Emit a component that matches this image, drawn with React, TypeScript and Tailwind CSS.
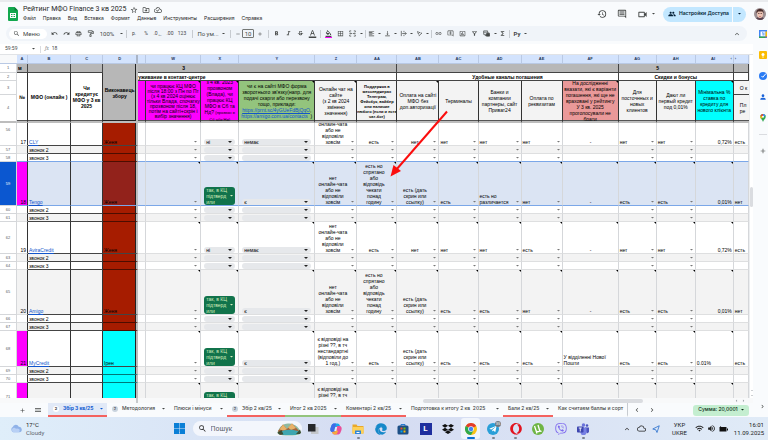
import { ReactNode } from "react";
import {
  MdAdd,
  MdBorderAll,
  MdChevronLeft,
  MdChevronRight,
  MdFormatAlignLeft,
  MdFormatBold,
  MdFormatColorFill,
  MdFormatColorText,
  MdFormatItalic,
  MdFunctions,
  MdGroup,
  MdHistory,
  MdInsertChartOutlined,
  MdKeyboardArrowUp,
  MdLink,
  MdMenu,
  MdOutlineAddComment,
  MdOutlineCloud,
  MdOutlineCloudDone,
  MdOutlineDriveFileMove,
  MdOutlineFilterAlt,
  MdOutlineInsertComment,
  MdOutlinePrint,
  MdOutlineVideocam,
  MdPerson,
  MdRedo,
  MdRemove,
  MdSearch,
  MdStarBorder,
  MdStrikethroughS,
  MdTextRotationAngleup,
  MdUndo,
  MdVerticalAlignBottom,
  MdVolumeUp,
  MdWifi,
} from "react-icons/md";
import { FaDropbox, FaEdge, FaOpera, FaTelegramPlane, FaViber } from "react-icons/fa";

const Caret = ({ className = "w-1 text-[#444746]" }: { className?: string }) => (
  <svg viewBox="0 0 8 4" className={`shrink-0 ${className}`} aria-hidden="true">
    <path d="M0 0h8L4 4z" fill="currentColor" />
  </svg>
);

/* ---------- header ---------- */

const menus = [
  "Файл",
  "Правка",
  "Вид",
  "Вставка",
  "Формат",
  "Данные",
  "Инструменты",
  "Расширения",
  "Справка",
];

const SheetsLogo = () => (
  <svg viewBox="0 0 20 28" className="h-[14px] w-[10px]" aria-hidden="true">
    <path d="M2 0h11l7 7v19a2 2 0 0 1-2 2H2a2 2 0 0 1-2-2V2a2 2 0 0 1 2-2z" fill="#12a84e" />
    <path d="M13 0l7 7h-7z" fill="#0b7a36" />
    <path d="M4 12h12v10H4zM6 14v2h3v-2zM11 14v2h3v-2zM6 18v2h3v-2zM11 18v2h3v-2z" fill="#fff" fillRule="evenodd" />
  </svg>
);

const Avatar = () => (
  <svg viewBox="0 0 24 24" className="size-3 rounded-full" aria-hidden="true">
    <rect width="24" height="24" fill="#9c8f92" />
    <path d="M3 24c1-5 5-6 9-6s8 1 9 6z" fill="#5b4450" />
    <ellipse cx="12" cy="12" rx="6" ry="8" fill="#ecc4b4" />
    <path d="M5 11C4 4 8 2 12 2s8 2 7 9l-2-4H8z" fill="#4a2e2c" />
    <path d="M8 11h3M13 11h3" stroke="#4a2e2c" strokeWidth="1.4" />
    <path d="M10 17h4" stroke="#c2575a" strokeWidth="1.2" />
  </svg>
);

const Header = () => (
  <header className="flex h-[26px] shrink-0 items-center border-t-2 border-[#e9ebee] bg-[#f9fbfd] pr-0.5 pl-2 text-[#1f1f1f]">
    <SheetsLogo />
    <div className="ml-[5px]">
      <div className="flex h-[9px] items-center gap-1 text-[#444746]">
        <h1 className="text-[7px] leading-[9px] text-[#1f1f1f]">Рейтинг МФО Finance 3 кв 2025</h1>
        <button aria-label="Пометить">
          <MdStarBorder className="size-2" />
        </button>
        <button aria-label="Переместить">
          <MdOutlineDriveFileMove className="size-2" />
        </button>
        <button aria-label="Статус документа">
          <MdOutlineCloudDone className="size-2" />
        </button>
      </div>
      <nav className="flex h-[9px] items-center gap-[7px] font-[Inter,sans-serif] text-[5px] leading-[9px]">
        {menus.map((menu) => (
          <button key={menu}>{menu}</button>
        ))}
      </nav>
    </div>
    <div className="ml-auto flex items-center text-[#444746]">
      <button aria-label="История" className="mr-[10px]">
        <MdHistory className="size-[10px]" />
      </button>
      <button aria-label="Комментарии" className="mr-[10px]">
        <MdOutlineInsertComment className="size-[10px]" />
      </button>
      <button aria-label="Видеовстреча" className="mr-2 flex items-center gap-1">
        <MdOutlineVideocam className="size-[11px]" />
        <Caret className="w-[3px]" />
      </button>
      <div className="flex h-[15px] items-center rounded-full bg-[#c2e7ff] text-[#001d35]">
        <button className="flex h-full items-center gap-[3px] border-r border-[#f9fbfd] pr-[3px] pl-[5px] font-[Inter,sans-serif] text-[5px] font-semibold">
          <MdGroup className="size-2" />
          Настройки Доступа
        </button>
        <button aria-label="Быстрые действия" className="px-[5px]">
          <Caret className="w-[3px]" />
        </button>
      </div>
      <button aria-label="Аккаунт" className="ml-2">
        <Avatar />
      </button>
    </div>
  </header>
);

/* ---------- toolbar ---------- */

const Tool = ({ label, w = "w-3", children }: { label: string; w?: string; children: ReactNode }) => (
  <button aria-label={label} className={`flex h-full shrink-0 items-center justify-center ${w}`}>
    {children}
  </button>
);

const Drop = ({ label }: { label: string }) => (
  <Tool label={label} w="w-1.5">
    <Caret className="w-[3px]" />
  </Tool>
);

const Sep = ({ w }: { w: string }) => (
  <span className={`flex shrink-0 justify-center ${w}`}>
    <span className="h-2 w-px bg-[#c7cbd0]" />
  </span>
);

const ico = "size-[7px]";

const Toolbar = () => (
  <div className="bg-[#f9fbfd] pb-[3px]">
    <div className="mx-1.5 flex h-[15px] items-center rounded-full bg-[#f0f4f9] pl-[3px] text-[5px] text-[#444746]">
      <label className="mr-px flex h-[10px] w-[38px] shrink-0 items-center gap-[3px] rounded-full bg-white pl-1">
        <MdSearch className={ico} />
        <input aria-label="Меню" placeholder="Меню" className="w-5 text-[6px] outline-none placeholder:text-[#444746]" />
      </label>
      <Tool label="Отменить"><MdUndo className={ico} /></Tool>
      <Tool label="Повторить"><MdRedo className={ico} /></Tool>
      <Tool label="Печать"><MdOutlinePrint className={ico} /></Tool>
      <Tool label="Копировать форматирование">
        <svg viewBox="0 0 16 16" className={ico} fill="none" stroke="currentColor" strokeWidth="1.6">
          <path d="M3 1.5h9v4H3zM12 3.500h3V8H8v2.500M6.500 10.500h3V15h-3z" />
        </svg>
      </Tool>
      <Tool label="Масштаб" w="w-[22px]"><span className="text-[6px]">100%</span></Tool>
      <Drop label="Выбрать масштаб" />
      <Sep w="w-1" />
      <Tool label="Денежный формат">р.</Tool>
      <Tool label="Процентный формат">%</Tool>
      <Tool label="Уменьшить число знаков">.0<span className="self-end pb-[3px]">←</span></Tool>
      <Tool label="Увеличить число знаков">.00</Tool>
      <Tool label="Другие форматы">123</Tool>
      <Sep w="w-2" />
      <Tool label="Шрифт" w="w-6"><span className="text-[6px]">По ум...</span></Tool>
      <Drop label="Выбрать шрифт" />
      <Sep w="w-2" />
      <Tool label="Уменьшить шрифт" w="w-2"><MdRemove className="size-[6px]" /></Tool>
      <input
        aria-label="Размер шрифта"
        defaultValue="10"
        className="h-[9px] w-3 shrink-0 rounded-[1px] border border-[#747775] text-center text-[6px] leading-[7px] outline-none"
      />
      <Tool label="Увеличить шрифт"><MdAdd className="size-[6px]" /></Tool>
      <Sep w="w-1" />
      <Tool label="Полужирный"><MdFormatBold className={ico} /></Tool>
      <Tool label="Курсив"><MdFormatItalic className={ico} /></Tool>
      <Tool label="Зачеркнутый"><MdStrikethroughS className={ico} /></Tool>
      <Tool label="Цвет текста">
        <MdFormatColorText className="size-[9px]" />
      </Tool>
      <Sep w="w-1" />
      <Tool label="Цвет заливки">
        <span className="flex flex-col items-center border-b border-[#ff00ff]">
          <MdFormatColorFill className={ico} />
        </span>
      </Tool>
      <Tool label="Границы"><MdBorderAll className={ico} /></Tool>
      <Tool label="Объединить ячейки">
        <svg viewBox="0 0 16 16" className={ico} fill="none" stroke="currentColor" strokeWidth="1.600">
          <path d="M5 2H1.500v3M11 2h3.500v3M5 14H1.500v-3M11 14h3.500v-3M1 8h5M4 6l2 2-2 2M15 8h-5M12 6l-2 2 2 2" />
        </svg>
      </Tool>
      <Drop label="Тип объединения" />
      <Sep w="w-0.5" />
      <Tool label="Выравнивание по горизонтали" w="w-2.5"><MdFormatAlignLeft className={ico} /></Tool>
      <Drop label="Выбрать выравнивание" />
      <Tool label="Выравнивание по вертикали" w="w-2.5"><MdVerticalAlignBottom className={ico} /></Tool>
      <Drop label="Выбрать вертикальное выравнивание" />
      <Tool label="Перенос текста" w="w-2.5">
        <svg viewBox="0 0 16 16" className={ico} fill="none" stroke="currentColor" strokeWidth="1.600">
          <path d="M3 2v12M9 2v3M9 11v3M5 8h9M11.500 5l3 3-3 3" />
        </svg>
      </Tool>
      <Drop label="Выбрать перенос" />
      <Tool label="Поворот текста" w="w-2.5"><MdTextRotationAngleup className={ico} /></Tool>
      <Drop label="Выбрать поворот" />
      <Sep w="w-0.5" />
      <Tool label="Вставить ссылку"><MdLink className={ico} /></Tool>
      <Tool label="Вставить комментарий"><MdOutlineAddComment className={ico} /></Tool>
      <Tool label="Вставить диаграмму"><MdInsertChartOutlined className={ico} /></Tool>
      <Tool label="Создать фильтр"><MdOutlineFilterAlt className={ico} /></Tool>
      <Tool label="Фильтры">
        <svg viewBox="0 0 16 16" className={ico} fill="none" stroke="currentColor" strokeWidth="1.600">
          <path d="M1.500 2h9v8h-9zM1.500 5h9M4 12.500h4M13 5v8H6" />
          <path d="M8 8h7v6H8z" fill="currentColor" />
        </svg>
      </Tool>
      <Drop label="Выбрать фильтр" />
      <Tool label="Функции" w="w-2"><MdFunctions className={ico} /></Tool>
      <Sep w="w-1.5" />
      <Tool label="Способ ввода" w="w-2.5"><span className="text-[6px] font-bold">Ру</span></Tool>
      <Drop label="Выбрать способ ввода" />
      <button aria-label="Скрыть меню" className="mr-[6px] ml-auto">
        <MdKeyboardArrowUp className="size-2" />
      </button>
    </div>
  </div>
);

const FormulaBar = () => (
  <div className="flex h-[11px] shrink-0 items-center border-b border-[#e1e3e6] bg-white pl-[5px] text-[5px] text-[#444746]">
    <input aria-label="Диапазон" defaultValue="59:59" className="w-[27px] outline-none" />
    <Caret className="w-[3px]" />
    <span className="ml-[5px] h-[7px] w-px bg-[#dadce0]" />
    <span className="ml-1 font-serif italic text-[#80868b]">fx</span>
    <input aria-label="Формула" defaultValue="18" className="ml-[3px] flex-1 outline-none" />
  </div>
);

/* ---------- grid ---------- */

const cols: [string, string][] = [
  ["", "w-[17px]"],
  ["A", "w-[11px]"],
  ["B", "w-[43px]"],
  ["C", "w-[32px]"],
  ["D", "w-[35px]"],
  ["V", "w-[8px]"],
  ["W", "w-[55px]"],
  ["X", "w-[38px]"],
  ["Y", "w-[76px]"],
  ["Z", "w-[42px]"],
  ["AA", "w-[40px]"],
  ["AB", "w-[42px]"],
  ["AC", "w-[39px]"],
  ["AD", "w-[43px]"],
  ["AE", "w-[41px]"],
  ["AF", "w-[56px]"],
  ["AG", "w-[38px]"],
  ["AH", "w-[39px]"],
  ["AI", "w-[38px]"],
  ["AJ", "w-[15px]"],
];

type Row = {
  n: number;
  h: string;
  bg: string;
  num?: string;
  name: string;
  linked?: boolean;
  who?: string;
  executor: string;
  pink?: boolean;
  selected?: boolean;
  phone?: string;
  form?: string;
  // Z, AA, AB, AC, AD, AE, AF, AG, AH, AI, AJ
  values?: string[];
};

const GRAY = "bg-[#f3f3f3]";
const RED = "bg-[#a61c00]";
const CYAN = "bg-[#00ffff]";

const noChat = "нет\nонлайн-чата\nабо не\nвідповіли\nзовсім";
const hidden = "есть но\nспрятано\nабо\nвідповідь\nчекати\nпонад\nгодину";
const shot = "есть (дать\nскрин или\nссылку)";
const confirmed = "так, в КЦ\nпідтверд\nили";

const calls = (n: number, executor: string, firstGray: boolean): Row[] => [
  { n, h: "h-2", bg: firstGray ? GRAY : "bg-white", name: "звонок 2", executor },
  { n: n + 1, h: "h-2", bg: firstGray ? "bg-white" : GRAY, name: "звонок 3", executor },
];

const rows: Row[] = [
  {
    n: 56, h: "h-[23px]", bg: "bg-white", num: "17", name: "CLY", linked: true, who: "Женя", executor: RED,
    phone: "ні", form: "немає",
    values: [noChat, "есть", "нет", "нет", "нет", "нет", "-", "нет", "нет", "0,72%", "есть"],
  },
  ...calls(57, RED, true),
  {
    n: 59, h: "h-[44px]", bg: "bg-[#dbe4f3]", num: "18", name: "Tengo", linked: true, who: "Женя",
    executor: "bg-[#92221b]", pink: true, selected: true, phone: confirmed, form: "є",
    values: [noChat, hidden, shot, "есть", "есть но\nразличается", "нет", "-", "есть", "есть", "0,01%", "нет"],
  },
  ...calls(60, RED, false),
  {
    n: 62, h: "h-8", bg: "bg-white", num: "19", name: "AviraCredit", linked: true, who: "Женя", executor: RED,
    phone: "ні", form: "немає",
    values: [noChat, "есть", "нет", "нет", "нет", "есть", "-", "нет", "нет", "0,72%", "есть"],
  },
  ...calls(63, RED, true),
  {
    n: 65, h: "h-[45px]", bg: GRAY, num: "20", name: "Amigo", linked: true, who: "Женя", executor: RED,
    phone: confirmed, form: "є",
    values: [noChat, hidden, shot, "есть", "есть", "нет", "-", "есть", "есть", "0,01%", "нет"],
  },
  ...calls(66, RED, false),
  {
    n: 68, h: "h-9", bg: "bg-white", num: "21", name: "MyCredit", linked: true, who: "Ірен", executor: CYAN,
    pink: true, phone: confirmed, form: "є",
    values: [
      "є відповіді на\nрізні ??, в тч\nнестандартні\n(відповіли до\n1 год.)",
      "есть", shot, "есть", "есть", "есть", "У відділенні Нової\nПошти", "есть", "есть", "0.01%", "есть",
    ],
  },
  ...calls(69, CYAN, true),
  {
    n: 71, h: "h-7", bg: GRAY, name: "", executor: CYAN, pink: true, phone: confirmed, form: "",
    values: ["є відповіді на\nрізні ??, в тч\nнестандартні\n(відповіли)", "", "", "", "", "", "", "", "", "", ""],
  },
];

// cells of each company row: which are centred and which have no list of options
const centred = [0, 1, 2];
const plain = [6, 9, 10];

const Note = () => (
  <span className="absolute top-0 right-0 border-t-2 border-l-2 border-t-black border-l-transparent" />
);

const Chip = ({ label, value }: { label: string; value: string }) => (
  <div className="relative mx-[3px]">
    <select
      aria-label={label}
      className="block h-1.5 w-full appearance-none rounded-full bg-[#e6e8eb] pl-0.5 text-[5px] leading-[6px] outline-none"
    >
      <option>{value}</option>
    </select>
    <Caret className="pointer-events-none absolute top-0.5 right-[3px] w-1 text-[#222]" />
  </div>
);

const CellMenu = ({ label }: { label: string }) => (
  <button aria-label={label} className="flex h-1.5 w-[7px] shrink-0 items-center justify-center">
    <Caret className="w-[3px] text-[#777]" />
  </button>
);

const GridRow = ({ row, blueBelow }: { row: Row; blueBelow: boolean }) => {
  const line = row.selected || blueBelow ? "border-b-[#7ba7e8]" : "border-b-[#dedfe0]";
  const dark = row.selected || blueBelow ? "border-b-[#7ba7e8]" : "border-b-[#444]";
  const cell = `relative border-r border-b border-r-[#d5d7da] p-0 align-bottom ${row.bg} ${line}`;
  const company = row.values !== undefined;
  const noted = company && row.n !== 56;

  return (
    <tr className={row.h}>
      <th
        scope="row"
        className={`border-r border-b border-[#d5d7da] px-0 pt-0 text-[4px] font-normal ${
          row.selected ? "bg-[#0b57d0] font-bold text-white" : "bg-white text-[#575b5f]"
        } ${row.n === 56 ? "pb-2" : "pb-0"}`}
      >
        {row.n}
      </th>
      <td
        className={`border-r border-b border-r-[#333] p-0 pr-px text-right align-bottom ${line} ${
          row.pink ? "bg-[#ff00ff]" : row.bg
        }`}
      >
        {row.num}
      </td>
      <td className={`border-r border-b border-r-[#333] p-0 pl-px align-bottom ${row.bg} ${dark}`}>
        {row.linked ? (
          <a href="#" className="text-[#1155cc] underline">
            {row.name}
          </a>
        ) : (
          row.name
        )}
      </td>
      <td className={`border-r border-b border-r-[#333] p-0 ${row.bg} ${dark}`} />
      <td
        className={`border-r-2 border-b border-r-[#bdbdbd] p-0 pl-px align-bottom shadow-[inset_-1px_0_0_#222] ${
          row.executor
        } ${company ? dark : "border-b-[#00000088]"}`}
      >
        {row.who}
      </td>
      <td className={cell} />
      <td className={cell}>
        {noted && <Note />}
        <div className="flex justify-end pr-px">
          <CellMenu label={`W${row.n}`} />
        </div>
      </td>
      <td className={cell}>
        {noted && <Note />}
        {row.phone === confirmed ? (
          <button className="mx-[3px] flex w-[31px] items-center justify-between rounded-[3px] bg-[#11734b] pr-0.5 pl-0.5 text-left whitespace-pre text-[#d4edbc]">
            {row.phone}
            <Caret className="w-[3px]" />
          </button>
        ) : (
          <Chip label={`X${row.n}`} value={row.phone ?? ""} />
        )}
      </td>
      <td className={cell}>
        {noted && <Note />}
        <Chip label={`Y${row.n}`} value={row.form ?? ""} />
      </td>
      {cols.slice(9).map(([letter], i) => {
        const text = row.values?.[i] ?? "";
        const align =
          centred.includes(i) || text === "-"
            ? "text-center"
            : text.includes(",") && i === 9
              ? "text-right pr-px"
              : "text-left";
        return (
          <td key={letter} className={cell}>
            {noted && i < 10 && <Note />}
            <div className={`flex items-end overflow-hidden ${row.n === 56 ? "max-h-[22px]" : ""}`}>
              <span className={`flex-1 pl-px whitespace-pre ${align}`}>{text}</span>
              {!plain.includes(i) && <CellMenu label={`${letter}${row.n}`} />}
            </div>
          </td>
        );
      })}
    </tr>
  );
};

const heads: { text: ReactNode; className: string; note?: boolean }[] = [
  { text: "", className: "bg-[#ff00ff]" },
  {
    text: "чи працює КЦ МФО\nпісля 18:00 з Пн по Пт\n(з 4 кв 2024 оцінює\nтільки Влада, спочатку\nпрозвоном після 18,\nпотім на сайті+скрін і\nвибір значення)",
    className: "bg-[#ff00ff] font-normal leading-[5px]",
    note: true,
  },
  {
    text: (
      <>
        {"з 4 кв. 2023\nпрозвоном\n(Влада), чи\nпрацює КЦ\nМФО в Сб та\nНд? "}
        <span className="text-[4px]">{"(прозвон в\nСб або Нд)"}</span>
      </>
    ),
    className: "bg-[#ff00ff] font-normal",
    note: true,
  },
  {
    text: (
      <>
        {"чи є на сайті МФО форма\nзворотнього зв'язку(напр. для\nподачі скарги або перезвону\nтощо, приклади:\n"}
        <a href="#" className="text-[#1155cc] underline">https://prnt.sc/4yGUeFdBjQqO</a>
        {",\n"}
        <a href="#" className="text-[#1155cc] underline">https://amigo.com.ua/contacts</a>
        {"  )"}
      </>
    ),
    className: "bg-[#93c47d] font-normal",
    note: true,
  },
  { text: "Онлайн чат на\nсайте\n(з 2 кв 2024\nзмінено\nзначення)", className: `${GRAY} font-normal`, note: true },
  {
    text: "Поддержка в\nмессенджерах\nТелеграм,\nФейсбук, вайбер\nили наличие\nлюбого (если и есть\nчат-бот)",
    className: `${GRAY} text-[4px] leading-[5px] font-bold`,
  },
  { text: "Оплата на сайті\nМФО без\nдоп.авторизації", className: `${GRAY} font-normal`, note: true },
  { text: "Терминалы", className: `${GRAY} font-normal` },
  { text: "Банки и\nкомпании\nпартнеры, сайт\nПриват24", className: `${GRAY} font-normal` },
  { text: "Оплата по\nреквизитам", className: `${GRAY} font-normal` },
  {
    text: "На дослідженні\nвказати, які є варіанти\nпогашення, які ще не\nвраховані у рейтингу\nУ 3 кв. 2025\nпроголосували не\nбрати",
    className: "bg-[#ea9999] font-normal",
    note: true,
  },
  { text: "Для\nпосточнных и\nновых\nклиентов", className: `${GRAY} font-normal` },
  { text: "Дают ли\nпервый кредит\nпод 0,01%", className: `${GRAY} font-normal` },
  { text: "Мінімальна %\nставка по\nкредиту для\nнового клієнта", className: `${CYAN} font-normal`, note: true },
];

const top = "border-r border-b border-[#444] bg-[#b7b7b7] p-0";
const band = "overflow-hidden border-r border-b border-[#444] bg-white p-0 font-bold whitespace-nowrap";
const frozen = "border-r border-b-2 border-r-[#333] border-b-[#bdbdbd] p-0 shadow-[inset_0_-1px_0_#555]";
const rowNo = "border-r border-b border-[#d5d7da] bg-white p-0 text-[4px] font-normal text-[#575b5f]";

const Grid = () => (
  <div className="relative min-h-0 flex-1 overflow-hidden">
    <table className="w-full table-fixed border-separate border-spacing-0 font-['Liberation_Sans',sans-serif] text-[5px] leading-[6px] text-black">
      <colgroup>
        {cols.map(([letter, width]) => (
          <col key={letter} className={width} />
        ))}
      </colgroup>
      <thead>
        <tr className="h-[9px] text-[4px]">
          {cols.map(([letter]) => (
            <th
              key={letter}
              scope="col"
              className={`border-b border-[#b9c9e4] p-0 text-[#1d3557] ${
                letter === "" ? "bg-[#f8f9fa]" : letter === "D" ? "border-r-2 border-r-[#a9b4c6] bg-[#d3e3fd]" : "border-r bg-[#d3e3fd]"
              }`}
            >
              {letter === "V" ? "" : letter === "AJ" ? <Hidden side="right" /> : letter}
              {letter === "AI" && <Hidden side="left" />}
            </th>
          ))}
        </tr>
        <tr className="h-[9px]">
          <th className={rowNo}>1</th>
          <th className={`${top} pl-px text-left`}>м</th>
          <th className={top} />
          <th className={top} />
          <th
            rowSpan={4}
            className="border-r-2 border-b-2 border-[#bdbdbd] bg-[#b7b7b7] p-0 text-center whitespace-pre shadow-[inset_-1px_-1px_0_#222]"
          >
            {"Виконавець\nзбору"}
          </th>
          <th colSpan={6} className={`${top} pl-11 text-left`}>3</th>
          <th colSpan={5} className={top} />
          <th colSpan={3} className={`${top} pr-9`}>5</th>
          <th className={top} />
        </tr>
        <tr className="h-2">
          <th className={rowNo}>2</th>
          <th rowSpan={3} className={`${frozen} bg-white`}>№</th>
          <th rowSpan={3} className={`${frozen} bg-white`}>МФО (онлайн )</th>
          <th rowSpan={3} className={`${frozen} bg-white whitespace-pre`}>{"Чи\nкредитує\nМФО у 3 кв\n2025"}</th>
          <th colSpan={6} className={`${band} text-left`}>уживание в контакт-центре</th>
          <th colSpan={5} className={band}>Удобные каналы погашения</th>
          <th colSpan={3} className={band}>Скидки и бонусы</th>
          <th className={band} />
        </tr>
        <tr className="h-[14px]">
          <th className={rowNo}>3</th>
          {heads.map((head, i) => (
            <th key={i} rowSpan={2} className={`relative ${frozen} ${head.className}`}>
              {head.note && <Note />}
              <div className="flex max-h-10 items-center justify-center overflow-hidden text-center">
                <span className="whitespace-pre">{head.text}</span>
              </div>
            </th>
          ))}
          <th className="overflow-hidden border-b border-[#444] bg-[#f3f3f3] p-0 pl-1.5 text-left font-normal whitespace-nowrap">
            О к
          </th>
        </tr>
        <tr className="h-7">
          <th className={`${rowNo} border-b-2 border-b-[#bdbdbd]`}>4</th>
          <th className={`${frozen} border-r-0 bg-[#f3f3f3] pl-1.5 text-left font-normal whitespace-pre`}>
            {"Пл\nре"}
          </th>
        </tr>
      </thead>
      <tbody>
        {rows.map((row, i) => (
          <GridRow key={row.n} row={row} blueBelow={rows[i + 1]?.selected ?? false} />
        ))}
      </tbody>
    </table>
    {/* pointer drawn over the cells */}
    <svg viewBox="0 0 60 68" className="absolute top-[55px] left-[389px] h-[68px] w-[60px]" aria-hidden="true">
      <path d="M58 1.500L7 60" stroke="#fb0d0d" strokeWidth="2" />
      <path d="M1.500 66.500L4.500 55L12 61z" fill="#fb0d0d" />
    </svg>
  </div>
);

function Hidden({ side }: { side: "left" | "right" }) {
  return (
    <button aria-label="Показать столбцы" className={side === "left" ? "float-right pr-px" : "float-left pl-px"}>
      {side === "left" ? "‹" : "›"}
    </button>
  );
}

const ScrollRail = () => (
  <div className="flex w-1 shrink-0 flex-col items-center border-l border-[#eceef0] bg-white">
    <div className="h-[132px]" />
    <div className="h-5 w-full rounded-full bg-[#dadce0]" />
    <div className="mt-auto flex flex-col gap-1 pb-0.5 text-[#9aa0a6]">
      <Caret className="w-0.5 rotate-180" />
      <Caret className="w-0.5" />
    </div>
  </div>
);

/* ---------- sheet tabs ---------- */

type Tab = { name: string; w: string; badge?: boolean; line: string };

const NONE = "border-b-transparent";
const ROSE = "border-b-[#f4625f]";

const tabs: Tab[] = [
  { name: "Збір 3 кв/25", w: "w-[59px]", badge: true, line: ROSE },
  { name: "Методология", w: "w-[62px]", badge: true, line: NONE },
  { name: "Плюси і мінуси", w: "w-[58px]", line: NONE },
  { name: "Збір 2 кв/25", w: "w-[58px]", badge: true, line: ROSE },
  { name: "Итог 2 кв 2025", w: "w-[56px]", line: "border-b-[#93c47d]" },
  { name: "Коментарі 2 кв/25", w: "w-[65px]", line: ROSE },
  { name: "Подготовка к итогу 2 кв  2025", w: "w-[97px]", line: NONE },
  { name: "Бали 2 кв/25", w: "w-[50px]", line: ROSE },
];

const SheetTabs = () => (
  <div className="flex h-[14px] shrink-0 items-stretch bg-[#f9fbfd] font-[Inter,sans-serif] text-[5px] font-medium text-[#444746]">
    <button aria-label="Добавить лист" className="ml-[19px]">
      <MdAdd className="size-[7px]" />
    </button>
    <button aria-label="Все листы" className="mr-1.5 ml-2">
      <MdMenu className="size-[8px]" />
    </button>
    {tabs.map((tab, i) => (
      <button
        key={tab.name}
        className={`flex shrink-0 items-center gap-1 border-b-2 pr-1 pl-[5px] whitespace-pre ${tab.w} ${tab.line} ${
          i === 0 ? "bg-[#e1e9f7] font-bold text-[#0b57d0]" : ""
        }`}
      >
        {tab.badge && (
          <span
            className={`flex size-1.5 shrink-0 items-center justify-center rounded-full text-[4px] leading-[6px] ${
              i === 0 ? "bg-white text-[#444746]" : "bg-[#c9d3de]"
            }`}
          >
            2
          </span>
        )}
        {tab.name}
        <Caret className="ml-auto w-[3px]" />
      </button>
    ))}
    <button className="mr-[5px] w-[75px] overflow-hidden border-r border-b-2 border-r-[#c7cbd0] border-b-transparent pl-[5px] text-left whitespace-nowrap">
      Как считаем баллы и сорт
    </button>
    <button aria-label="Назад" className="mr-[7px]">
      <MdChevronLeft className="size-2" />
    </button>
    <button aria-label="Вперед">
      <MdChevronRight className="size-2" />
    </button>
    <button className="mr-1 ml-auto flex h-[11px] w-14 shrink-0 items-center justify-center gap-[3px] self-center rounded-[3px] bg-[#c4eed0] whitespace-nowrap text-[#072711]">
      Сумма: 20,0001
      <Caret className="w-[3px]" />
    </button>
  </div>
);

/* ---------- side panel ---------- */

const SidePanel = () => (
  <aside className="flex w-[15px] shrink-0 flex-col items-center bg-[#f9fbfd] pt-1 pl-1">
    <button aria-label="Календарь">
      <svg viewBox="0 0 16 16" className="size-2">
        <path d="M0 0h16v16H0z" fill="#4285f4" />
        <path d="M3 3h10v10H3z" fill="#fff" />
        <path d="M13 3h3v10h-3z" fill="#fbbc04" />
        <path d="M0 13h13v3H0z" fill="#34a853" />
        <path d="M13 13h3l-3 3z" fill="#ea4335" />
        <path d="M6 5.500h2V11M10 5v6" stroke="#4285f4" strokeWidth="1.500" fill="none" />
      </svg>
    </button>
    <button aria-label="Keep" className="mt-[13px]">
      <svg viewBox="0 0 16 16" className="size-2">
        <rect width="16" height="16" rx="2" fill="#fbbc04" />
        <circle cx="8" cy="7" r="3" fill="#fff" />
        <path d="M6.500 11h3v2h-3z" fill="#fff" />
      </svg>
    </button>
    <button aria-label="Задачи" className="mt-[13px]">
      <svg viewBox="0 0 16 16" className="size-2">
        <circle cx="8" cy="8" r="8" fill="#2a7bf4" />
        <path d="M5 8l2.500 2.500L14 3" stroke="#fff" strokeWidth="2" fill="none" />
      </svg>
    </button>
    <button aria-label="Контакты" className="mt-[13px] text-[#1a63d9]">
      <MdPerson className="size-2" />
    </button>
    <button aria-label="Карты" className="mt-[13px]">
      <svg viewBox="0 0 16 16" className="size-2">
        <path d="M8 0a5.500 5.500 0 0 1 5.500 5.500C13.500 10 9 11 8 16 7 11 2.500 10 2.500 5.500A5.500 5.500 0 0 1 8 0z" fill="#34a853" />
        <path d="M8 0a5.500 5.500 0 0 1 5 3.500L8 6z" fill="#4285f4" />
        <path d="M8 0a5.500 5.500 0 0 0-5 3.500L8 6z" fill="#ea4335" />
        <path d="M3 3.500c-1 2 0 5 1.500 6L8 6z" fill="#fbbc04" />
        <circle cx="8" cy="5.500" r="2" fill="#fff" />
      </svg>
    </button>
    <span className="mt-3 h-px w-2 bg-[#dadce0]" />
    <button aria-label="Дополнения" className="mt-3 text-[#444746]">
      <MdAdd className="size-2" />
    </button>
    <button aria-label="Показать панель" className="mt-auto mb-[7px] text-[#444746]">
      <MdChevronRight className="size-[7px]" />
    </button>
  </aside>
);

/* ---------- taskbar ---------- */

const StoreIcon = () => (
  <svg viewBox="0 0 24 24" className="size-3">
    <path d="M8 6V3h8v3" stroke="#2b7cd3" strokeWidth="2" fill="none" />
    <rect x="1" y="5" width="22" height="18" rx="3" fill="#1d4f86" />
    <path d="M7 9h4v4H7z" fill="#f25022" />
    <path d="M13 9h4v4h-4z" fill="#7fba00" />
    <path d="M7 15h4v4H7z" fill="#00a4ef" />
    <path d="M13 15h4v4h-4z" fill="#ffb900" />
  </svg>
);

const apps: { name: string; icon: ReactNode; running?: boolean }[] = [
  {
    name: "Представлення завдань",
    icon: (
      <svg viewBox="0 0 24 24" className="size-3">
        <path d="M8 8h15v14H8z" fill="#c3c6ca" />
        <path d="M2 2h15v15H2z" fill="#26282b" />
      </svg>
    ),
  },
  {
    name: "Copilot",
    icon: (
      <svg viewBox="0 0 24 24" className="size-3">
        <path d="M9 1h6c3 0 4 2 5 5l-6 1-4 11H5c-4 0-5-4-4-8l2-5c1-3 3-4 6-4z" fill="#1ba7e8" />
        <path d="M1 11l2-6c1-3 3-4 6-4h3L8 17l-3 1c-4 0-5-3-4-7z" fill="#3f6be8" />
        <path d="M15 23H9c-3 0-4-2-5-5l6-1 4-11h5c4 0 5 4 4 8l-2 5c-1 3-3 4-6 4z" fill="#e9509a" />
        <path d="M4 18l6-1 2-5 4 5-3 6H9c-3 0-4-2-5-5z" fill="#f7a83c" />
        <path d="M10.500 8h4l-2 8h-4z" fill="#e3e8f7" />
      </svg>
    ),
  },
  {
    name: "Провідник",
    running: true,
    icon: (
      <svg viewBox="0 0 24 24" className="size-3">
        <path d="M1 3h8l2 3h12v15H1z" fill="#e9a92a" />
        <path d="M1 8h22v13H1z" fill="#fdd15a" />
        <path d="M6 15h12v7H6z" fill="#2f86d8" />
        <path d="M9 18h6v2H9z" fill="#fff" />
      </svg>
    ),
  },
  { name: "Edge", icon: <FaEdge className="size-3 text-[#1688c9]" /> },
  { name: "Store", icon: <StoreIcon /> },
  {
    name: "Lightshot",
    icon: (
      <span className="flex size-3 items-center justify-center bg-[#1f2f9e] text-[8px] leading-3 font-bold text-white">
        L
      </span>
    ),
  },
  { name: "Dropbox", icon: <FaDropbox className="size-3 text-[#111]" /> },
  {
    name: "Chrome",
    running: true,
    icon: (
      <svg viewBox="0 0 24 24" className="size-3">
        <circle cx="12" cy="12" r="12" fill="#fbc116" />
        <path d="M12 12L1.600 6A12 12 0 0 1 22.400 6z" fill="#e33b2e" />
        <path d="M12 12L1.600 6A12 12 0 0 0 12 24l5-9z" fill="#2da94f" />
        <circle cx="12" cy="12" r="5.600" fill="#fff" />
        <circle cx="12" cy="12" r="4.400" fill="#4285f4" />
      </svg>
    ),
  },
  {
    name: "Telegram",
    running: true,
    icon: (
      <span className="relative flex size-3 items-center justify-center rounded-full bg-[#2a9fd8] text-white">
        <FaTelegramPlane className="size-2" />
        <span className="absolute -top-0.5 -right-0.5 size-1.5 rounded-full bg-[#6f7780] text-center text-[4px] leading-[6px]">
          35
        </span>
      </span>
    ),
  },
  { name: "Opera", running: true, icon: <FaOpera className="size-3 text-[#e2131f]" /> },
  {
    name: "uTorrent",
    icon: (
      <svg viewBox="0 0 24 24" className="size-3">
        <circle cx="12" cy="12" r="12" fill="#6fb544" />
        <path d="M5 6l3 9c1 3 5 3 7 1M12 4l3 10c.5 2 2 3 4 2.500M8 15l2 6" stroke="#fff" strokeWidth="2.600" fill="none" />
      </svg>
    ),
  },
  { name: "Viber", icon: <FaViber className="size-3 text-[#7d68ee]" /> },
  {
    name: "Teams",
    running: true,
    icon: (
      <svg viewBox="0 0 24 24" className="size-3">
        <circle cx="13" cy="4" r="3.500" fill="#6b73dc" />
        <circle cx="20" cy="5" r="2.500" fill="#4c55be" />
        <path d="M16 9h8v8a4 4 0 0 1-5 3z" fill="#4c55be" />
        <path d="M7 9h12v9a6 6 0 0 1-12 1z" fill="#7780e4" />
        <rect x="0" y="7" width="13" height="12" rx="1.500" fill="#3d46b0" />
        <path d="M3.500 10h6M6.500 10v7" stroke="#fff" strokeWidth="1.800" />
      </svg>
    ),
  },
];

const Taskbar = () => (
  <footer className="grid h-[23px] shrink-0 grid-cols-[1fr_auto_1fr] items-center bg-linear-to-r from-[#dfeefa] via-[#d5dcf2] to-[#e0ebf7] text-[6px] leading-2 text-[#222]">
    <div className="flex items-center gap-1 pl-2.5">
      <svg viewBox="0 0 26 18" className="h-[9px] w-[12px]" aria-hidden="true">
        <path d="M7 17a6 6 0 0 1-1-11 7 7 0 0 1 13-1 6 6 0 0 1 1 12z" fill="#8fb2e8" />
        <path d="M7 17a5 5 0 0 1 0-9c3-1 5 0 6 2 3-2 8 0 8 3s-1 4-3 4z" fill="#b8d0f5" />
      </svg>
      <div>
        <p>17°C</p>
        <p className="text-[#5b626b]">Cloudy</p>
      </div>
    </div>
    <div className="flex h-full items-center pr-0.5">
      <button aria-label="Пуск" className="mr-2">
        <svg viewBox="0 0 22 22" className="size-[11px]">
          <path d="M0 0h10.500v10.500H0zM11.500 0H22v10.500H11.500zM0 11.500h10.500V22H0zM11.500 11.500H22V22H11.500z" fill="#0a7fd6" />
        </svg>
      </button>
      <label className="mr-0.5 flex h-[15px] w-[109px] items-center gap-1 rounded-full bg-[#f3f6fc] pl-[5px]">
        <MdSearch className="size-[9px]" />
        <input aria-label="Пошук" placeholder="Пошук" className="min-w-0 flex-1 text-[7px] outline-none placeholder:text-[#5b626b]" />
        <svg viewBox="0 0 52 28" className="h-[14px] w-[26px] rounded-full" aria-hidden="true">
          <path d="M2 24C6 10 14 2 26 3s22 8 24 21c-12 4-36 4-48 0z" fill="#8fb9a0" />
          <path d="M4 18L14 5l8 9 10-11 16 17-10 6H8z" fill="#a4643a" />
          <path d="M14 5l8 9-6 3-9-2zM32 3l8 9-10 4-6-5z" fill="#e8b269" />
          <path d="M8 20c10-6 26-6 38-1l-6 7H12z" fill="#3fa6b0" />
          <path d="M3 21l8-5 4 9H6zM40 24l8-9 3 9z" fill="#3e4f34" />
        </svg>
      </label>
      <div className="flex h-full w-[289px] items-center justify-between">
        {apps.map((app) => (
          <button
            key={app.name}
            aria-label={app.name}
            className={`relative flex h-[21px] w-[19px] items-center justify-center rounded-[3px] ${
              app.name === "Chrome" ? "bg-[#f1f5fc]" : ""
            }`}
          >
            {app.icon}
            {app.running && (
              <span
                className={`absolute bottom-0 h-0.5 rounded-full ${
                  app.name === "Chrome" ? "w-2 bg-[#0a6fd0]" : "w-[3px] bg-[#7c8490]"
                }`}
              />
            )}
          </button>
        ))}
      </div>
    </div>
    <div className="flex items-center justify-end gap-[6px] pr-1">
      <button aria-label="Приховані значки">
        <MdKeyboardArrowUp className="size-2" />
      </button>
      <MdOutlineCloud className="size-[9px]" />
      <svg viewBox="0 0 16 16" className="mr-1.5 size-2" aria-hidden="true">
        <path d="M14.500 1.500L1.500 8l6 1.500L10 15z" fill="none" stroke="#1b66c9" strokeWidth="1.500" />
      </svg>
      <p className="text-center">
        УКР
        <br />
        UKRE
      </p>
      <button aria-label="Мережа, звук, батарея" className="ml-0.5 flex items-center gap-[3px]">
        <MdWifi className="size-[9px]" />
        <MdVolumeUp className="size-[9px]" />
        <svg viewBox="0 0 18 12" className="h-[6px] w-[9px]">
          <path d="M1 2h14v9H1zM16 5h2v4h-2zM3 0l3 4H1z" fill="#111" />
        </svg>
      </button>
      <p className="text-right">
        16:01
        <br />
        11.09.2025
      </p>
    </div>
  </footer>
);

const App = () => {
  return (
    <div className="flex h-screen flex-col overflow-hidden bg-white font-[Roboto,sans-serif]">
      <Header />
      <div className="flex min-h-0 flex-1">
        <main className="flex min-w-0 flex-1 flex-col">
          <Toolbar />
          <FormulaBar />
          <div className="flex min-h-0 flex-1">
            <Grid />
            <ScrollRail />
          </div>
          <div className="flex h-[5px] shrink-0 items-center bg-[#f8f9fa] pr-2">
            <span className="ml-[136px] h-full w-0.5 bg-[#c7cacd]" />
            <span className="ml-auto h-1 w-[220px] rounded-full bg-[#dadce0]" />
            <span className="ml-[92px] flex gap-1 text-[#9aa0a6]">
              <Caret className="w-[3px] rotate-90" />
              <Caret className="w-[3px] -rotate-90" />
            </span>
          </div>
          <SheetTabs />
        </main>
        <SidePanel />
      </div>
      <Taskbar />
    </div>
  );
};

export default App;
